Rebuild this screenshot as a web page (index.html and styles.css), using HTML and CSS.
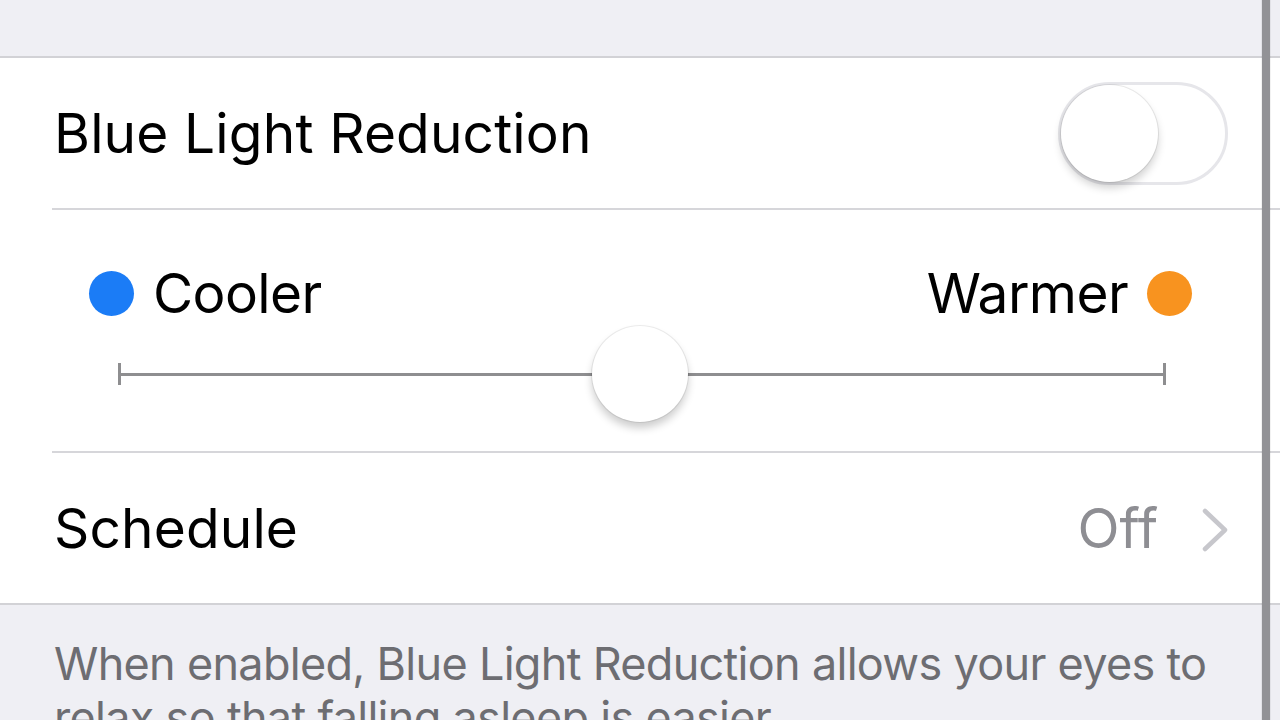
FILE: index.html
```html
<!DOCTYPE html>
<html>
<head>
<meta charset="utf-8">
<link rel="stylesheet" href="styles.css">
</head>
<body>
<div class="screen">
  <div class="top-space"></div>
  <div class="group">
    <div class="row row-toggle">
      <span class="label">Blue Light Reduction</span>
      <div class="switch"><div class="switch-knob"></div></div>
    </div>
    <div class="sep"></div>
    <div class="row-temp">
      <div class="temp-labels">
        <div class="temp-side">
          <span class="dot dot-cool"></span>
          <span class="label temp-label">Cooler</span>
        </div>
        <div class="temp-side">
          <span class="label temp-label">Warmer</span>
          <span class="dot dot-warm"></span>
        </div>
      </div>
      <div class="slider">
        <span class="tick"></span>
        <span class="track"></span>
        <span class="tick"></span>
        <div class="slider-knob" style="left: 50%"></div>
      </div>
    </div>
    <div class="sep"></div>
    <div class="row row-schedule">
      <span class="label">Schedule</span>
      <div class="detail">
        <span class="value">Off</span>
        <svg class="chevron" width="26" height="44" viewBox="0 0 26 44"><path d="M3 3 L23 22 L3 41" fill="none" stroke="#c7c7cc" stroke-width="4.5" stroke-linecap="round" stroke-linejoin="round"/></svg>
      </div>
    </div>
  </div>
  <div class="footer">When enabled, Blue Light Reduction allows your eyes to relax so that falling asleep is easier.</div>
  <div class="scrollbar"></div>
</div>
</body>
</html>
```
FILE: styles.css
```css
html, body {
  margin: 0;
  padding: 0;
}
body {
  background: #efeff4;
  font-family: Inter, "Liberation Sans", sans-serif;
  width: 1280px;
  height: 720px;
  overflow: hidden;
}
.screen {
  position: relative;
  width: 1280px;
  height: 720px;
  overflow: hidden;
}
.top-space {
  height: 56px;
}
.group {
  background: #ffffff;
  border-top: 2px solid #d2d2d6;
  border-bottom: 2px solid #d2d2d6;
}
.row {
  display: flex;
  align-items: center;
  justify-content: space-between;
  padding: 0 52px 0 54px;
}
.row-toggle {
  height: 150px;
}
.label {
  font-size: 55px;
  color: #000;
  line-height: 66px;
  letter-spacing: 0.15px;
}
.temp-label {
  letter-spacing: -0.6px;
}
.sep {
  height: 2px;
  margin-left: 52px;
  background: #d6d6da;
}
.switch {
  box-sizing: border-box;
  width: 170px;
  height: 103px;
  border: 3px solid #e6e6ea;
  border-radius: 52px;
  display: flex;
  align-items: center;
}
.switch-knob {
  width: 97px;
  height: 97px;
  border-radius: 50%;
  background: #fff;
  box-shadow: 0 6px 8px rgba(0,0,0,0.18), 0 0 0 1px rgba(0,0,0,0.08);
}
.row-temp {
  padding: 50px 88px 29px 89px;
}
.temp-labels {
  display: flex;
  justify-content: space-between;
  align-items: center;
  height: 66px;
}
.temp-side {
  display: flex;
  align-items: center;
  gap: 19px;
}
.dot {
  width: 45px;
  height: 45px;
  border-radius: 50%;
  display: block;
}
.dot-cool { background: #1b7cf6; }
.dot-warm { background: #f8931f; }
.slider {
  position: relative;
  display: flex;
  align-items: center;
  height: 96px;
  margin: 0 26px 0 29px;
}
.tick {
  width: 3px;
  height: 22px;
  background: #8e8e90;
}
.track {
  flex: 1;
  height: 3px;
  background: #8e8e90;
}
.slider-knob {
  position: absolute;
  top: 0;
  width: 96px;
  height: 96px;
  margin-left: -50px;
  border-radius: 50%;
  background: #fff;
  box-shadow: 0 6px 8px rgba(0,0,0,0.2), 0 0 0 1px rgba(0,0,0,0.07);
}
.row-schedule {
  height: 150px;
}
.detail {
  display: flex;
  align-items: center;
  gap: 44px;
}
.value {
  font-size: 55px;
  line-height: 66px;
  color: #8e8e93;
}
.chevron {
  display: block;
  margin-top: 4px;
}
.footer {
  padding: 32px 20px 0 54px;
  font-size: 45px;
  line-height: 54px;
  letter-spacing: -0.7px;
  color: #6d6d72;
}
.scrollbar {
  position: absolute;
  top: 0;
  left: 1262px;
  width: 8px;
  height: 720px;
  background: #929296;
  box-shadow: 0 0 1px rgba(0,0,0,0.3);
}
```
